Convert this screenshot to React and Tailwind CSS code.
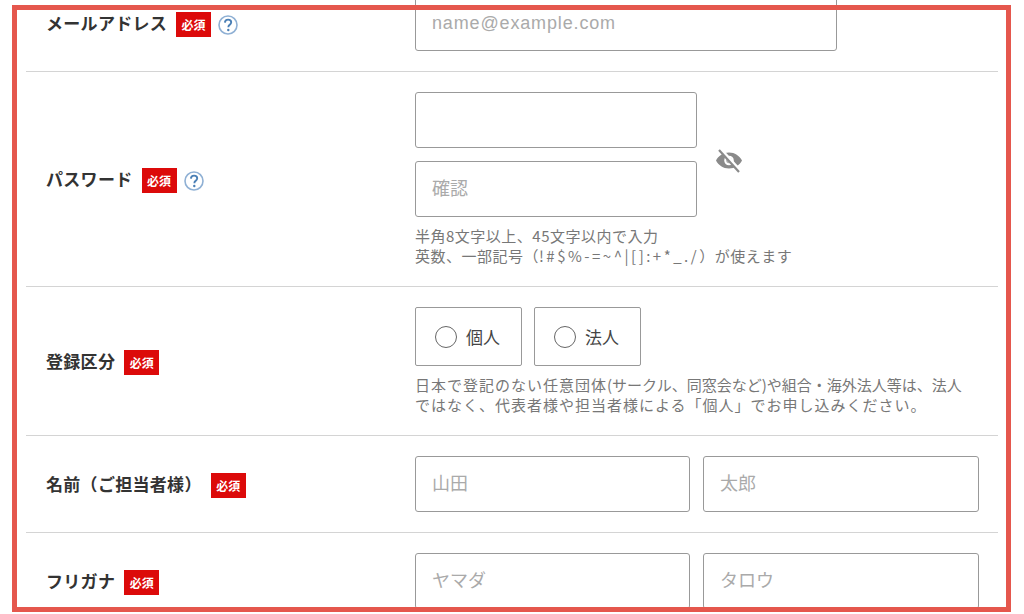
import React from 'react';

const Required = () => (
  <span className="mt-[3px] ml-[9px] flex h-[25px] w-[35px] shrink-0 items-center justify-center bg-[#dc0a0a] text-[12px] leading-none font-bold text-white">
    必須
  </span>
);

const Help = () => (
  <svg className="mt-[3px] ml-[7px] shrink-0" width="20" height="20" viewBox="0 0 20 20">
    <circle cx="10" cy="10" r="9" fill="#fff" stroke="#8fb0d4" strokeWidth="1.6" />
    <path d="M6.9 7.6c.1-1.9 1.4-3 3.2-3 1.8 0 3.1 1.1 3.1 2.7 0 1.2-.6 1.9-1.6 2.6-.9.6-1.2 1-1.2 2v.4" fill="none" stroke="#4a7fb5" strokeWidth="1.9" />
    <circle cx="10.3" cy="15" r="1.2" fill="#4a7fb5" />
  </svg>
);

const Label = ({ text, help }) => (
  <div className="flex w-[369px] shrink-0 items-center pl-[20px]">
    <span className="mb-[2px] text-[17px] leading-none font-bold tracking-[0.3px] text-[#333]">{text}</span>
    <Required />
    {help && <Help />}
  </div>
);

const Field = ({ placeholder, className = '' }) => (
  <input
    placeholder={placeholder}
    className={`h-[56px] rounded-[3px] border border-[#999] bg-white px-[16px] font-['Liberation_Sans','Noto_Sans_CJK_JP',sans-serif] text-[18px] text-[#333] outline-none placeholder:text-[#aaa] ${className}`}
  />
);

const Radio = ({ text }) => (
  <label className="flex h-[59px] w-[107px] items-center rounded-[2px] border border-[#999] pl-[19px] text-[#444]">
    <span className="h-[22px] w-[22px] rounded-full border border-[#666]" />
    <span className="ml-[9px] text-[17px] leading-none">{text}</span>
  </label>
);

const Hint = ({ children, className = '' }) => (
  <p className={`text-[15px] leading-[20px] tracking-[0.5px] text-[#777] ${className}`}>{children}</p>
);

const Row = ({ children }) => (
  <div className="flex items-center border-b border-[#d4d4d4] py-[20px]">{children}</div>
);

const EyeOff = () => (
  <svg className="mt-[10px] ml-[18px] shrink-0" width="28" height="26" viewBox="0 0 28 26">
    <path
      fillRule="evenodd"
      d="M14 5.5C8.2 5.5 3.4 8.8 1 13.5c2.4 4.7 7.2 8 13 8s10.6-3.3 13-8c-2.4-4.7-7.2-8-13-8Zm0 3.2a4.8 4.8 0 1 1 0 9.6 4.8 4.8 0 0 1 0-9.6Z"
      fill="#8a8a8a"
    />
    <circle cx="14" cy="13.5" r="2.8" fill="#b0b0b0" />
    <path d="M5 2 25 24" stroke="#fff" strokeWidth="4" />
    <path d="M4 3 24 25" stroke="#8a8a8a" strokeWidth="2.2" />
  </svg>
);

export default function App() {
  return (
    <div className="relative h-[614px] w-[1024px] overflow-hidden bg-white font-['Noto_Sans_CJK_JP','Liberation_Sans',sans-serif]">
      <div className="mt-[-25px] ml-[26px] w-[972px]">
        <Row>
          <Label text="メールアドレス" help />
          <div className="pl-[20px]">
            <Field placeholder="name@example.com" className="w-[422px] tracking-[0.85px]" />
          </div>
        </Row>
        <Row>
          <Label text="パスワード" help />
          <div className="pl-[20px]">
            <div className="flex items-center">
              <div className="flex flex-col gap-[13px]">
                <Field className="w-[282px]" />
                <Field placeholder="確認" className="w-[282px]" />
              </div>
              <EyeOff />
            </div>
            <Hint className="mt-[9px]">
              半角8文字以上、45文字以内で入力
              <br />
              英数、一部記号（<span className="tracking-[2.5px]">!#$%-=~^|[]:+*_./</span>）が使えます
            </Hint>
          </div>
        </Row>
        <Row>
          <Label text="登録区分" />
          <div className="pl-[20px]">
            <div className="flex gap-[12px]">
              <Radio text="個人" />
              <Radio text="法人" />
            </div>
            <Hint className="mt-[9px] w-[560px] tracking-normal">
              <span className="tracking-[1px]">日本で登記のない任意団体</span>
              (サークル、同窓会など)や組合・海外法人等は、法人
              <br />
              <span className="tracking-[1px]">ではなく、代表者様や担当者様による「個人」でお申し込みください。</span>
            </Hint>
          </div>
        </Row>
        <Row>
          <Label text="名前（ご担当者様）" />
          <div className="flex gap-[13px] pl-[20px]">
            <Field placeholder="山田" className="w-[275px]" />
            <Field placeholder="太郎" className="w-[276px]" />
          </div>
        </Row>
        <Row>
          <Label text="フリガナ" />
          <div className="flex gap-[13px] pl-[20px]">
            <Field placeholder="ヤマダ" className="w-[275px]" />
            <Field placeholder="タロウ" className="w-[276px]" />
          </div>
        </Row>
      </div>
      <div className="pointer-events-none absolute top-[5px] left-[12px] h-[607px] w-[999px] border-[5px] border-[#e5574d]" />
    </div>
  );
}
